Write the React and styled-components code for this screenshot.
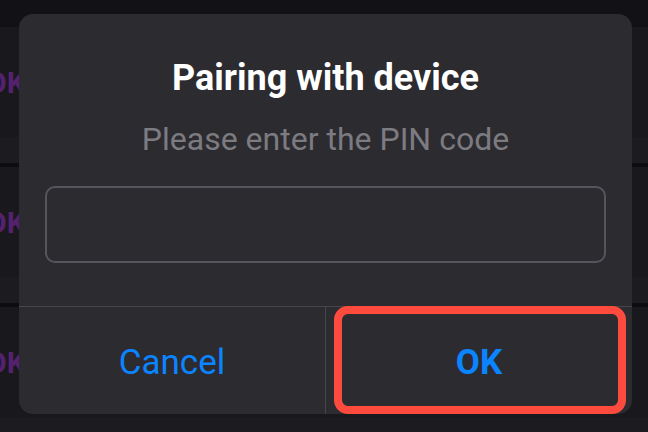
import { createGlobalStyle, styled } from "styled-components";

const GlobalStyle = createGlobalStyle`
  html, body {
    margin: 0;
    padding: 0;
    background: #121116;
    font-family: Roboto, "Noto Sans", "Liberation Sans", sans-serif;
  }
`;

const Screen = styled.div`
  position: relative;
  width: 648px;
  height: 432px;
  overflow: hidden;
  background: #121116;
`;

// list behind the dim layer
const List = styled.div`
  display: flex;
  flex-direction: column;
  padding-top: 27px;
`;

const ListRow = styled.div`
  height: 110px;
  display: flex;
  align-items: center;
  background: #19181d;
  border-bottom: 26px solid #1c1b20;
  box-shadow: 0 4px 0 #0d0c10;
  margin-bottom: 4px;
`;

const RowLabel = styled.span`
  margin-left: -14px;
  font-size: 30px;
  font-weight: 700;
  color: #54216f;
`;

const Dialog = styled.div`
  position: absolute;
  left: 19px;
  top: 14px;
  width: 613px;
  height: 400px;
  border-radius: 14px;
  background: #2c2b30;
  display: flex;
  flex-direction: column;
  overflow: hidden;
`;

const Body = styled.div`
  display: flex;
  flex-direction: column;
  align-items: center;
  padding: 42px 26px 0;
  height: 292px;
  box-sizing: border-box;
`;

const Title = styled.h2`
  margin: 0;
  font-size: 36px;
  line-height: 44px;
  font-weight: 700;
  color: #ffffff;
`;

const Subtitle = styled.p`
  margin: 21px 0 0;
  font-size: 32px;
  line-height: 36px;
  color: #7c7b81;
`;

const PinInput = styled.input`
  margin-top: 29px;
  width: 100%;
  height: 77px;
  box-sizing: border-box;
  border: 2px solid #56555b;
  border-radius: 10px;
  background: transparent;
  outline: none;
  color: #fff;
  font-size: 28px;
  padding: 0 16px;
`;

const Footer = styled.div`
  flex: 1;
  display: flex;
  border-top: 1px solid #47464b;
`;

const Action = styled.button`
  position: relative;
  flex: 1;
  border: none;
  background: transparent;
  font-family: inherit;
  font-size: 35px;
  font-weight: ${(p) => (p.$strong ? 700 : 400)};
  color: #0a84ff;
  padding: 4px 0 0;
  & + & {
    border-left: 1px solid #47464b;
  }
`;

const Highlight = styled.span`
  position: absolute;
  left: 8px;
  right: 6px;
  top: -1px;
  bottom: 0;
  border: 8px solid #ff4b3e;
  border-radius: 14px;
  pointer-events: none;
`;

export default function App() {
  return (
    <Screen>
      <GlobalStyle />
      <List>
        {[0, 1, 2].map((i) => (
          <ListRow key={i}>
            <RowLabel>OK</RowLabel>
          </ListRow>
        ))}
      </List>
      <Dialog>
        <Body>
          <Title>Pairing with device</Title>
          <Subtitle>Please enter the PIN code</Subtitle>
          <PinInput type="text" />
        </Body>
        <Footer>
          <Action>Cancel</Action>
          <Action $strong>
            OK
            <Highlight />
          </Action>
        </Footer>
      </Dialog>
    </Screen>
  );
}
